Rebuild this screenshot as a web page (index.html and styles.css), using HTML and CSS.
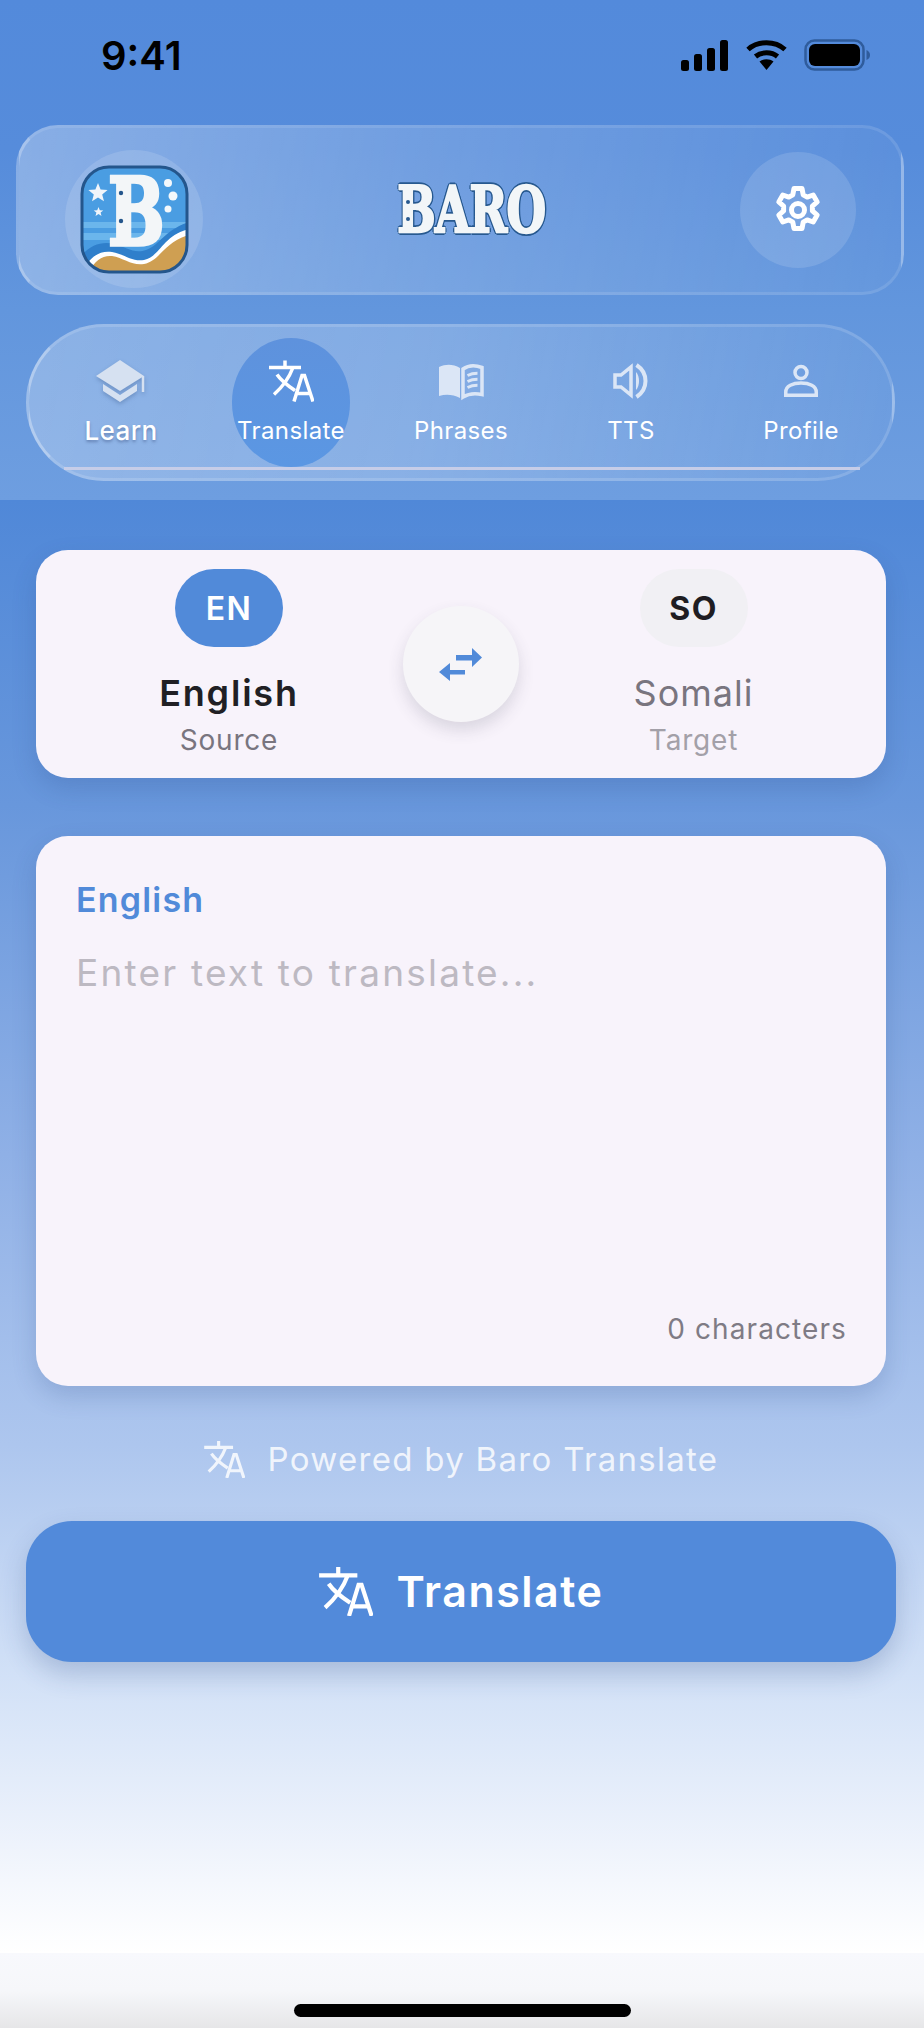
FILE: index.html
```html
<!DOCTYPE html>
<html lang="en">
<head>
    <meta charset="UTF-8">
    <meta name="viewport" content="width=device-width, initial-scale=1.0">
    <title>Baro Translate</title>
    <link rel="stylesheet" href="styles.css">
</head>
<body>
    <svg class="defs" width="0" height="0">
        <symbol id="translate" viewBox="0 0 45 41">
            <path d="M0 7h32M16 0v7M24 7C21 15 14 26 5 34M8 14C12 20 20 26 26 30M25 41L33 15h2.500L44 41M27.500 33h14" fill="none" stroke="currentColor" stroke-width="3.500"/>
        </symbol>
        <clipPath id="logo-clip">
            <rect x="2" y="2" width="105" height="105" rx="27"/>
        </clipPath>
    </svg>

    <div class="phone">
        <div class="top">
            <div class="status">
                <span class="time">9:41</span>
                <div class="status-icons">
                    <svg width="48" height="31" viewBox="0 0 48 31">
                        <rect x="0" y="20" width="8" height="11" rx="2.500"/>
                        <rect x="13" y="14" width="8" height="17" rx="2.500"/>
                        <rect x="26" y="8" width="8" height="23" rx="2.500"/>
                        <rect x="39" y="0" width="8" height="31" rx="2.500"/>
                    </svg>
                    <svg width="41" height="30" viewBox="0 0 41 30">
                        <path d="M2 9.500C12 .5 29 .5 39 9.500" fill="none" stroke="#000" stroke-width="5"/>
                        <path d="M9.500 16.500c6-5 16-5 22 0" fill="none" stroke="#000" stroke-width="5"/>
                        <path d="M13.500 21.500c4-3 10-3 14 0L20.500 30z"/>
                    </svg>
                    <svg width="66" height="32" viewBox="0 0 66 32">
                        <rect x="1.500" y="1.500" width="58" height="29" rx="9" fill="none" stroke="#2f5c9c" stroke-width="2.500"/>
                        <rect x="5" y="5" width="51" height="22" rx="6"/>
                        <path d="M62.500 11c2.500 1 3.500 3 3.500 5s-1 4-3.500 5z" fill="#2f5c9c"/>
                    </svg>
                </div>
            </div>

            <header class="app-header">
                <div class="logo-circle">
                    <svg class="logo" width="109" height="109" viewBox="0 0 109 109">
                        <g clip-path="url(#logo-clip)">
                            <rect width="109" height="109" fill="#4a9de2"/>
                            <path d="M0 57h109v6H0zM0 68h109v7H0z" fill="#6bb6ec"/>
                            <path d="M0 92C10 80 22 76 34 79c12 3 20 10 32 6 14-5 18-20 43-28v52H0z" fill="#2f7fcb"/>
                            <path d="M4 104C10 92 20 85 32 87c12 2 20 10 32 8 16-3 18-24 45-31v45H4z" fill="#fff"/>
                            <path d="M8 109C14 96 22 90 32 91c12 2 20 10 32 8 16-3 20-22 45-29v39z" fill="#cf9f52"/>
                        </g>
                        <rect x="2" y="2" width="105" height="105" rx="27" fill="none" stroke="#24568c" stroke-width="3"/>
                        <text class="logo-b" transform="translate(28 80) scale(.72 1)">B</text>
                        <path d="M18 18l2.600 6.500 7 .4-5.400 4.500 1.800 6.800-6-3.800-6 3.800 1.800-6.800-5.400-4.500 7-.4z" fill="#f1f5fa"/>
                        <path d="M18.500 42l1.300 3.200 3.500.2-2.700 2.200.9 3.400-3-1.900-3 1.900.9-3.400-2.700-2.200 3.500-.2z" fill="#f1f5fa"/>
                        <circle cx="88" cy="18" r="4" fill="#f4f8fb"/>
                        <circle cx="93" cy="31" r="4.500" fill="#f4f8fb"/>
                        <circle cx="88" cy="44" r="3.500" fill="#f4f8fb"/>
                        <circle cx="41" cy="28" r="2.200" fill="#24568c"/>
                        <circle cx="41" cy="56" r="2.200" fill="#24568c"/>
                    </svg>
                </div>
                <div class="wordmark"><span>BARO</span></div>
                <button class="gear-btn" type="button" aria-label="Settings">
                    <svg width="48" height="48" viewBox="0 0 48 48" fill="none" stroke="#fff" stroke-width="5" stroke-linejoin="round">
                        <path d="M20 2.500h8l1.200 6.300 4 2.300 6-2.100 4 6.900-4.800 4.200v4.800l4.800 4.200-4 6.900-6-2.100-4 2.300-1.200 6.300h-8l-1.200-6.300-4-2.300-6 2.100-4-6.900 4.800-4.200v-4.800L4.800 15.900l4-6.900 6 2.100 4-2.300z"/>
                        <circle cx="24" cy="24" r="6.500"/>
                    </svg>
                </button>
            </header>

            <nav class="tabs">
                <div class="tab">
                    <svg class="tab-icon cap" width="50" height="42" viewBox="0 0 50 42">
                        <path d="M24 0l24 16-24 15L0 16z" fill="#d6e1f1"/>
                        <path d="M7 24l17 11 17-11v7L24 42 7 31z" fill="#d6e1f1"/>
                        <path d="M47 16v16" stroke="#d6e1f1" stroke-width="2.500"/>
                    </svg>
                    <span class="tab-label learn">Learn</span>
                </div>
                <div class="tab active">
                    <svg class="tab-icon" width="45" height="41"><use href="#translate"/></svg>
                    <span class="tab-label">Translate</span>
                </div>
                <div class="tab">
                    <svg class="tab-icon" width="45" height="34" viewBox="0 0 45 34">
                        <path d="M0 3c7-3 14-3 21 1v30C14 30.500 7 30 0 32z" fill="#dbe6f6"/>
                        <path d="M24 5C29.500 1 36.500 1 43 3.500v27C36.500 29 29.500 29.500 24 33z" fill="none" stroke="#dbe6f6" stroke-width="3.500"/>
                        <path d="M28.500 11.500c3.500-1.800 6.500-2.300 10-2.300M28.500 17.500c3.500-1.800 6.500-2.300 10-2.300M28.500 23.500c3.500-1.800 6.500-2.300 10-2.300" fill="none" stroke="#dbe6f6" stroke-width="3"/>
                    </svg>
                    <span class="tab-label">Phrases</span>
                </div>
                <div class="tab">
                    <svg class="tab-icon" width="37" height="36" viewBox="0 0 37 36" fill="none" stroke="#dbe6f6" stroke-width="3.500">
                        <path d="M18 4v28L8 24H2V12h6z"/>
                        <path d="M23 9c4 4 4 14 0 18z" fill="#dbe6f6" stroke="none"/>
                        <path d="M23.500 2c12 8 12 24 0 32" stroke-width="4"/>
                    </svg>
                    <span class="tab-label">TTS</span>
                </div>
                <div class="tab">
                    <svg class="tab-icon" width="34" height="32" viewBox="0 0 34 32" fill="none" stroke="#dbe6f6" stroke-width="3.500">
                        <circle cx="17" cy="7.500" r="6"/>
                        <path d="M1.750 30.250V27c0-6 7-9 15.250-9s15.250 3 15.250 9v3.250z"/>
                    </svg>
                    <span class="tab-label">Profile</span>
                </div>
            </nav>
        </div>

        <main class="content">
            <section class="card lang-card">
                <div class="lang">
                    <span class="badge badge-on">EN</span>
                    <span class="lang-name">English</span>
                    <span class="lang-sub">Source</span>
                </div>
                <button class="swap" type="button" aria-label="Swap languages">
                    <svg width="44" height="33" viewBox="1 0 44 33" fill="#518ad9">
                        <path d="M18 7h16V0l10 9.500L34 19v-6.500H18z"/>
                        <path d="M27 22H12v-7L1 24l11 9v-6.500h15z"/>
                    </svg>
                </button>
                <div class="lang off">
                    <span class="badge">SO</span>
                    <span class="lang-name">Somali</span>
                    <span class="lang-sub">Target</span>
                </div>
            </section>

            <section class="card text-card">
                <span class="text-label">English</span>
                <span class="placeholder">Enter text to translate...</span>
                <span class="count">0 characters</span>
            </section>

            <div class="powered">
                <svg width="41" height="37"><use href="#translate"/></svg>
                <span>Powered by Baro Translate</span>
            </div>

            <button class="translate-btn" type="button">
                <svg width="54" height="49"><use href="#translate"/></svg>
                <span>Translate</span>
            </button>
        </main>

        <div class="home-bar"><span class="home-pill"></span></div>
    </div>
</body>
</html>
```

FILE: styles.css
```css
* {
    box-sizing: border-box;
}
body {
    margin: 0;
    font-family: Inter, "Liberation Sans", sans-serif;
}
.defs {
    display: block;
    height: 0;
}
.phone {
    width: 924px;
    height: 2028px;
    display: flex;
    flex-direction: column;
    overflow: hidden;
}

/* top band */
.top {
    height: 500px;
    flex: none;
    background: linear-gradient(180deg, #538adb 0%, #568cdb 30%, #6296dd 62%, #6e9ee0 100%);
    padding-top: 125px;
    position: relative;
}
.status {
    position: absolute;
    top: 0;
    left: 0;
    right: 0;
    height: 110px;
    display: flex;
    justify-content: space-between;
    align-items: center;
    padding: 0 54px 0 101px;
}
.time {
    font-size: 40px;
    font-weight: 600;
    color: #000;
}
.status-icons {
    display: flex;
    align-items: center;
    gap: 17px;
}
.app-header {
    height: 170px;
    margin: 0 20px 0 16px;
    padding: 0 45px 0 46px;
    display: flex;
    justify-content: space-between;
    align-items: center;
    border-radius: 42px;
    border: 3px solid rgba(255, 255, 255, 0.1);
    border-left-color: rgba(255, 255, 255, 0.26);
    background: linear-gradient(100deg, rgba(255, 255, 255, 0.3) 0%, rgba(255, 255, 255, 0.16) 45%, rgba(255, 255, 255, 0.03) 100%);
}
.logo-circle {
    width: 138px;
    height: 138px;
    margin-top: 18px;
    border-radius: 50%;
    background: rgba(255, 255, 255, 0.13);
    display: flex;
    align-items: center;
    justify-content: center;
}
.logo {
    overflow: visible;
}
.logo-b {
    font-family: "DejaVu Serif", serif;
    font-weight: 700;
    font-size: 93px;
    fill: #f3f6f8;
    stroke: #f3f6f8;
    stroke-width: 3.500px;
}
.wordmark {
    width: 150px;
    height: 54px;
    display: flex;
    align-items: center;
    justify-content: center;
    position: relative;
}
.wordmark span {
    font-family: "DejaVu Serif", serif;
    font-weight: 700;
    font-size: 64px;
    line-height: 54px;
    letter-spacing: -1px;
    color: #f2f6f8;
    -webkit-text-stroke: 2.500px #f2f6f8;
    text-shadow: 3px 0 #27598f, -3px 0 #27598f, 0 3px #27598f, 0 -3px #27598f, 2px 2px #27598f, -2px 2px #27598f, 2px -2px #27598f, -2px -2px #27598f;
    transform: scaleX(0.71);
    flex: none;
}
/* the two rivets on the B */
.wordmark::after {
    content: "";
    position: absolute;
    left: 9px;
    top: 17px;
    width: 4px;
    height: 4px;
    border-radius: 50%;
    background: #27598f;
    box-shadow: 0 17px #27598f;
}
.gear-btn {
    width: 116px;
    height: 116px;
    padding: 0;
    border: 0;
    border-radius: 50%;
    background: rgba(255, 255, 255, 0.13);
    display: flex;
    align-items: center;
    justify-content: center;
}

/* tab bar */
.tabs {
    height: 157px;
    margin: 29px 29px 0 26px;
    padding: 11px 6px 0 7px;
    display: grid;
    grid-template-columns: repeat(5, 1fr);
    align-items: start;
    justify-items: center;
    border-radius: 78px;
    border: 3px solid rgba(255, 255, 255, 0.14);
    border-left-color: rgba(255, 255, 255, 0.32);
    background: linear-gradient(100deg, rgba(255, 255, 255, 0.26) 0%, rgba(255, 255, 255, 0.2) 45%, rgba(255, 255, 255, 0.03) 100%);
    position: relative;
}
.tabs::after {
    content: "";
    position: absolute;
    left: 35px;
    right: 32px;
    bottom: 8px;
    height: 3px;
    background: #c6cde8;
}
.tab {
    width: 118px;
    height: 129px;
    display: flex;
    flex-direction: column;
    align-items: center;
    border-radius: 59px / 64px;
    color: #fff;
}
.tab.active {
    background: linear-gradient(180deg, #5e92dd, #5b97e3);
}
.tab-icon {
    height: 42px;
    margin-top: 22px;
    color: #fff;
}
.cap {
    filter: drop-shadow(0 2px 2px rgba(50, 80, 130, 0.35));
}
.tab-label {
    margin-top: 14px;
    font-size: 24px;
    line-height: 30px;
    letter-spacing: 0.4px;
    white-space: nowrap;
}
.tab-label.learn {
    font-size: 26px;
    font-weight: 500;
    text-shadow: 0 2px 3px rgba(50, 70, 120, 0.45);
}

/* main area */
.content {
    flex: 1;
    padding: 50px 28px 0 26px;
    display: flex;
    flex-direction: column;
    background: linear-gradient(180deg, #5088d8 0%, #6897dc 21%, #8fb0e6 45%, #adc6ee 65%, #d2e1f7 81%, #f4f7fd 95%, #ffffff 100%);
}
.card {
    margin: 0 10px;
    background: #f8f3fb;
    border-radius: 32px;
    box-shadow: 0 10px 24px rgba(40, 70, 130, 0.2);
}
.lang-card {
    height: 228px;
    padding: 19px 18px 19px 19px;
    display: grid;
    grid-template-columns: 348px 116px 1fr;
}
.lang {
    display: flex;
    flex-direction: column;
    align-items: center;
}
.badge {
    width: 108px;
    height: 78px;
    border-radius: 39px;
    background: #f1f0f4;
    color: #1f1d22;
    font-size: 32px;
    font-weight: 700;
    letter-spacing: 1.500px;
    display: flex;
    align-items: center;
    justify-content: center;
}
.badge-on {
    background: #518ad9;
    color: #fff;
    font-weight: 600;
}
.lang-name {
    margin-top: 24px;
    font-size: 36px;
    line-height: 44px;
    font-weight: 600;
    letter-spacing: 1.800px;
    color: #211f24;
}
.lang-sub {
    margin-top: 8px;
    font-size: 28px;
    line-height: 34px;
    letter-spacing: 0.800px;
    color: #79757f;
}
.off .lang-name {
    font-weight: 400;
    letter-spacing: 1px;
    color: #79757f;
}
.off .lang-sub {
    color: #a3a0a8;
}
.swap {
    width: 116px;
    height: 116px;
    margin-top: 37px;
    padding: 0;
    border: 0;
    border-radius: 50%;
    background: #f6f5f8;
    box-shadow: 0 8px 16px rgba(60, 60, 90, 0.16);
    display: flex;
    align-items: center;
    justify-content: center;
}
.text-card {
    height: 550px;
    margin-top: 58px;
    padding: 44px 39px 40px 40px;
    display: flex;
    flex-direction: column;
}
.text-label {
    font-size: 34px;
    line-height: 40px;
    font-weight: 600;
    letter-spacing: 1.200px;
    color: #518ad9;
}
.placeholder {
    margin-top: 31px;
    font-size: 37px;
    line-height: 44px;
    letter-spacing: 2.200px;
    color: #bdb9c2;
}
.count {
    margin-top: auto;
    align-self: flex-end;
    font-size: 28px;
    line-height: 34px;
    letter-spacing: 1.100px;
    color: #7f7b85;
}
.powered {
    height: 44px;
    margin-top: 51px;
    display: flex;
    align-items: center;
    justify-content: center;
    gap: 23px;
    font-size: 33px;
    letter-spacing: 1.300px;
    color: rgba(255, 255, 255, 0.82);
}
.translate-btn {
    height: 141px;
    margin-top: 40px;
    padding-bottom: 2px;
    flex: none;
    border: 0;
    border-radius: 46px;
    background: #528ada;
    color: #fff;
    font-family: inherit;
    font-size: 43px;
    font-weight: 600;
    letter-spacing: 1.500px;
    box-shadow: 0 12px 26px rgba(40, 70, 130, 0.24);
    display: flex;
    align-items: center;
    justify-content: center;
    gap: 24px;
}

/* bottom strip */
.home-bar {
    height: 75px;
    flex: none;
    display: flex;
    justify-content: center;
    padding-top: 51px;
    background: linear-gradient(180deg, #f8f9fd 0%, #f6f7fa 50%, #e6e6e8 100%);
}
.home-pill {
    width: 337px;
    height: 13px;
    border-radius: 7px;
    background: #000;
}
```
